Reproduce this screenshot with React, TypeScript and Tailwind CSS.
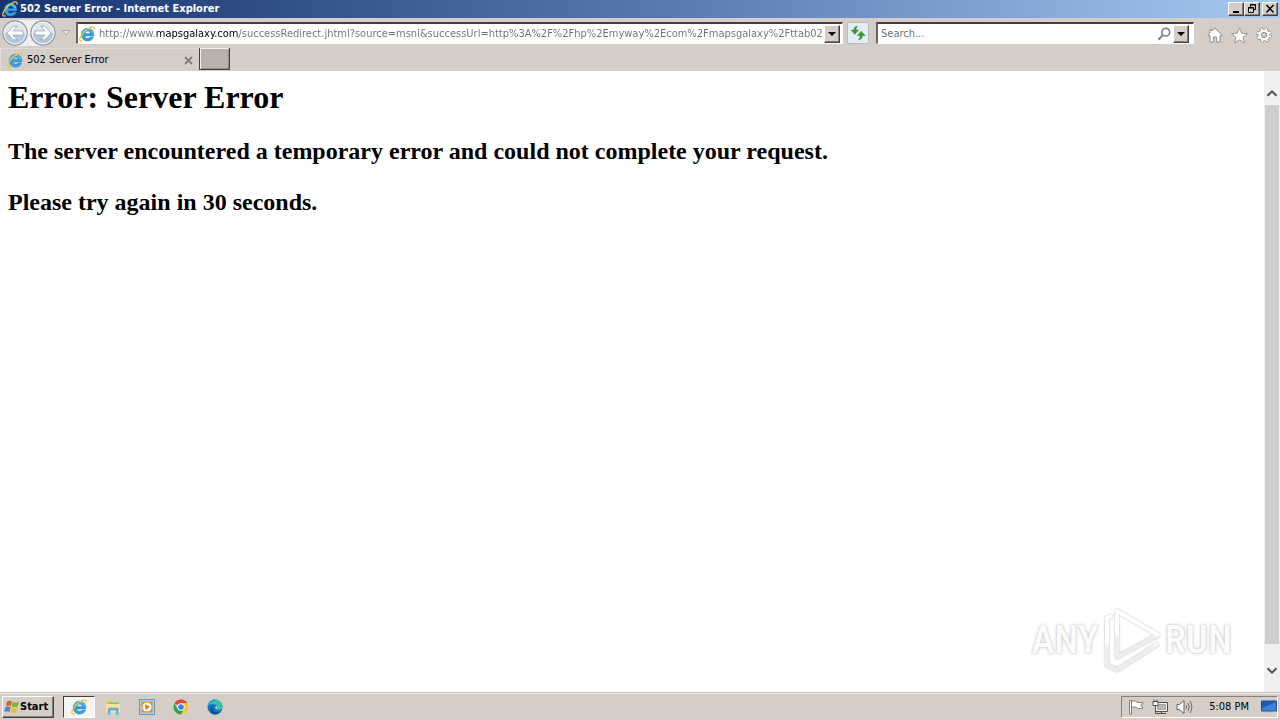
import { useState } from "react";

const ADDRESS =
  "http://www.mapsgalaxy.com/successRedirect.jhtml?source=msni&successUrl=http%3A%2F%2Fhp%2Emyway%2Ecom%2Fmapsgalaxy%2Fttab02%2F";

const RAISED =
  "border border-t-white border-l-white border-r-[#404040] border-b-[#404040] bg-[#d5cec8] shadow-[inset_-1px_-1px_0_#85807b]";

function IeLogo({ className }: { className: string }) {
  return (
    <svg viewBox="0 0 16 16" className={className} aria-hidden="true">
      <path
        d="M8.6 2.3C12.4 2.3 14.8 4.9 14.8 8.6V9.9H6C6.2 11.4 7.2 12.3 8.8 12.3C9.9 12.3 10.7 11.9 11.2 11.1H14.5C13.6 13.6 11.5 15 8.7 15C5 15 2.3 12.4 2.3 8.7C2.3 5 5 2.3 8.6 2.3ZM6.1 7.4H11.3C11.1 5.9 10.1 5 8.7 5C7.3 5 6.3 5.9 6.1 7.4Z"
        fill="#36a3e0"
        fillRule="evenodd"
        stroke="#1c7dbd"
        strokeWidth=".5"
      />
      <path d="M3.6 7.8C4 5.2 6 3.4 8.6 3.4C11 3.4 12.8 4.6 13.5 6.8" fill="none" stroke="#93d7f8" strokeWidth=".9" />
      <path
        d="M3.6 14.6C1.6 15.7.3 14.8 1 12.3C2.2 8.3 7.6 2.9 11.8 1.2C14.3.3 15.7 1.2 14.9 3.8"
        fill="none"
        stroke="#efc333"
        strokeWidth="1.3"
      />
    </svg>
  );
}

function RoundArrow({ flip }: { flip?: boolean }) {
  return (
    <svg viewBox="0 0 26 26" className={flip ? "size-[26px] -scale-x-100" : "size-[26px]"} aria-hidden="true">
      <circle cx="13" cy="13" r="12.2" fill="#dfe4e9" stroke="#8a939d" strokeWidth="1.2" />
      <path d="M1.8 13a11.2 11.2 0 0 0 22.4 0Z" fill="#b3c8dc" />
      <circle cx="13" cy="13" r="10.8" fill="none" stroke="#f1f4f7" strokeWidth="1" />
      <path
        d="M4.8 13L11.4 6.2H15.2L10.8 10.9H21V15.1H10.8L15.2 19.8H11.4Z"
        fill="#fff"
        stroke="#93a8bc"
        strokeWidth=".8"
      />
    </svg>
  );
}

function DropButton({ label }: { label: string }) {
  return (
    <button aria-label={label} className={`flex h-[18px] w-4 shrink-0 items-center justify-center ${RAISED}`}>
      <svg viewBox="0 0 8 4" className="h-1 w-2" aria-hidden="true">
        <path d="M0 0H8L4 4Z" fill="#000" />
      </svg>
    </button>
  );
}

function TitleBar() {
  return (
    <header className="flex h-[18px] items-center bg-linear-to-r from-[#17346f] via-[#5576ae] to-[#a6caf0] pr-0.5 pl-0.5">
      <IeLogo className="size-4" />
      <h1 className="ml-0.5 flex-1 text-[11px] leading-4 font-bold text-white">
        502 Server Error - Internet Explorer
      </h1>
      <button aria-label="Minimize" className={`h-3.5 w-4 ${RAISED}`}>
        <svg viewBox="0 0 14 12" className="h-3 w-3.5" aria-hidden="true">
          <path d="M4 8H10V10H4Z" fill="#000" />
        </svg>
      </button>
      <button aria-label="Restore" className={`h-3.5 w-4 ${RAISED}`}>
        <svg viewBox="0 0 14 12" className="h-3 w-3.5" aria-hidden="true">
          <path d="M5.5 4V1.5H10.5V6.5H9M5 2H11M3.5 4.5H8.5V9.5H3.5ZM3 5H9" fill="none" stroke="#000" />
        </svg>
      </button>
      <button aria-label="Close" className={`ml-0.5 h-3.5 w-4 ${RAISED}`}>
        <svg viewBox="0 0 14 12" className="h-3 w-3.5" aria-hidden="true">
          <path d="M3.5 2L10.5 9.5M10.5 2L3.5 9.5" stroke="#000" strokeWidth="1.5" />
        </svg>
      </button>
    </header>
  );
}

function Toolbar() {
  const [address, setAddress] = useState(ADDRESS);
  return (
    <div className="flex h-[30px] items-center pr-2 pl-0.5">
      <div className="flex w-[54px] gap-0.5 rounded-full bg-[#f0efee]">
        <button aria-label="Back">
          <RoundArrow />
        </button>
        <button aria-label="Forward">
          <RoundArrow flip />
        </button>
      </div>
      <button aria-label="Recent pages" className="flex w-5 justify-center">
        <svg viewBox="0 0 10 6" className="h-1.5 w-2.5" aria-hidden="true">
          <path d="M1 .5H9L5 5Z" fill="#e6e2df" stroke="#aaa5a0" />
        </svg>
      </button>
      <div className="flex h-[22px] flex-1 items-center border-t-2 border-r border-b border-l-2 border-t-[#453d42] border-r-white border-b-white border-l-[#6a6461] bg-white pr-0.5 pl-px">
        <IeLogo className="size-4 shrink-0" />
        <input
          aria-label="Address"
          spellCheck={false}
          value={address}
          onChange={(e) => setAddress(e.target.value)}
          className="ml-1 min-w-0 flex-1 bg-[linear-gradient(to_right,#707070_56px,#000_56px,#000_140px,#707070_140px)] bg-clip-text text-[11px] leading-4 text-transparent caret-black outline-none"
        />
        <span className="w-0.5" />
        <DropButton label="Address history" />
      </div>
      <button
        aria-label="Refresh"
        className="ml-1 flex size-[22px] items-center justify-center rounded-xs border border-[#b5bcc2] bg-[#e6edf2]"
      >
        <svg viewBox="0 0 16 16" className="size-4" aria-hidden="true">
          <path
            d="M7.5 1.2C5 1.2 4 2.6 4 5H1L4.8 9.4L8.6 5H6C6 3.4 6.4 2.2 7.5 1.2ZM8.5 14.8C11 14.8 12.4 13.2 12.4 10.6H15.2L11.2 6.2L7.2 10.6H10C10 12.4 9.6 13.8 8.5 14.8Z"
            fill="#3b9a36"
            stroke="#27802a"
            strokeWidth=".4"
          />
        </svg>
      </button>
      <div className="ml-[7px] flex h-[22px] w-[318px] items-center border-t-2 border-r border-b border-l-2 border-t-[#453d42] border-r-white border-b-white border-l-[#6a6461] bg-white pr-1">
        <input
          aria-label="Search"
          placeholder="Search..."
          className="min-w-0 flex-1 pl-[3px] text-[11px] leading-4 outline-none placeholder:text-[#707070]"
        />
        <button aria-label="Search the web" className="mr-0.5">
          <svg viewBox="0 0 14 14" className="size-3.5" aria-hidden="true">
            <circle cx="8.8" cy="5.2" r="3.9" fill="none" stroke="#85858a" strokeWidth="1.7" />
            <path d="M6 8L1.4 12.6" stroke="#85858a" strokeWidth="2.2" />
          </svg>
        </button>
        <DropButton label="Search providers" />
      </div>
      <nav className="ml-[13px] flex items-center gap-2 pt-1" aria-label="Browser tools">
        <button aria-label="Home">
          <svg viewBox="0 0 16 16" className="size-4" aria-hidden="true">
            <path
              d="M8 1L15.2 8.2L14 9.2L13 8.4V15H9.6V10H6.4V15H3V8.4L2 9.2L.8 8.2L3 6V2.5H5V4Z"
              fill="#fff"
              stroke="#8b8783"
              strokeWidth=".9"
            />
          </svg>
        </button>
        <button aria-label="Favorites">
          <svg viewBox="0 0 18 18" className="size-[17px]" aria-hidden="true">
            <path
              d="M9 .9L11.3 6.5L17.3 7L12.7 10.9L14.2 16.9L9 13.6L3.8 16.9L5.3 10.9L.7 7L6.7 6.5Z"
              fill="#fff"
              stroke="#8b8783"
              strokeWidth=".9"
            />
          </svg>
        </button>
        <button aria-label="Tools">
          <svg viewBox="0 0 16 16" className="size-4" aria-hidden="true">
            <circle cx="8" cy="8" r="6.2" fill="none" stroke="#8b8783" strokeWidth="3.2" strokeDasharray="2.9 1.97" />
            <circle cx="8" cy="8" r="4.6" fill="none" stroke="#8b8783" strokeWidth="3.4" />
            <circle cx="8" cy="8" r="6" fill="none" stroke="#fff" strokeWidth="2.6" strokeDasharray="1.7 3.01" strokeDashoffset="-.6" />
            <circle cx="8" cy="8" r="4.3" fill="none" stroke="#fff" strokeWidth="2.6" />
            <circle cx="8" cy="8" r="2.6" fill="#d5cec8" stroke="#8b8783" strokeWidth=".8" />
          </svg>
        </button>
      </nav>
    </div>
  );
}

function TabStrip() {
  return (
    <div className="flex h-[23px]">
      <div className="flex w-[199px] items-center border-t border-l border-[#e2ddd9] pr-1.5 pl-1.5">
        <IeLogo className="size-4" />
        <span className="ml-1 flex-1 text-[11px] leading-4 text-black">502 Server Error</span>
        <button aria-label="Close tab">
          <svg viewBox="0 0 9 9" className="size-[9px]" aria-hidden="true">
            <path d="M1 1L8 8M8 1L1 8" stroke="#84807c" strokeWidth="1.8" />
          </svg>
        </button>
      </div>
      <button
        aria-label="New tab"
        className="h-[22px] w-[31px] border-r border-b border-l border-r-[#45413e] border-b-[#45413e] border-l-[#45413e] bg-[#b9b1ab] shadow-[inset_1px_1px_0_#f4f1ee,inset_-1px_-1px_0_#918a85]"
      />
    </div>
  );
}

function Watermark() {
  return (
    <div className="absolute right-8 bottom-[18px] flex items-center font-['Roboto_Condensed','Liberation_Sans_Narrow','Liberation_Sans',sans-serif] text-[39px] leading-[68px] font-medium text-[#fbfbfb] [text-shadow:0_0_2px_#bbb,0_0_4px_#ddd]">
      <span>ANY</span>
      <svg viewBox="0 0 62 68" className="ml-0.5 h-[68px] w-[62px] drop-shadow-[0_0_1px_#bbb]" aria-hidden="true">
        <defs>
          <linearGradient id="mark" x1="0" y1="0" x2="0" y2="1">
            <stop offset=".5" stopColor="#fff" />
            <stop offset=".6" stopColor="#ededed" />
          </linearGradient>
        </defs>
        <g fill="none" stroke="url(#mark)" strokeWidth="4" strokeLinejoin="round">
          <path d="M16 5L57 29L16 51Z" />
          <path d="M11 10L6 12V59L16 64L57 38" />
        </g>
      </svg>
      <span className="ml-0.5">RUN</span>
    </div>
  );
}

function ScrollBar() {
  return (
    <div className="flex w-4 flex-col bg-[#f0f0f0]">
      <button aria-label="Scroll up" className="flex h-[34px] items-center justify-center pt-2.5">
        <svg viewBox="0 0 12 8" className="h-2 w-3" aria-hidden="true">
          <path d="M1.5 6.8L6 2.3L10.5 6.8" fill="none" stroke="#505050" strokeWidth="2" />
        </svg>
      </button>
      <div className="mx-px flex-1 bg-[#cdcdcd]" />
      <button aria-label="Scroll down" className="flex h-12 items-center justify-center pt-1.5">
        <svg viewBox="0 0 12 8" className="h-2 w-3" aria-hidden="true">
          <path d="M1.5 1.2L6 5.7L10.5 1.2" fill="none" stroke="#505050" strokeWidth="2" />
        </svg>
      </button>
    </div>
  );
}

function Taskbar() {
  return (
    <footer className="flex h-[28px] items-center border-t border-[#c3beb8] bg-[#d5cec8] pr-0.5 pl-0.5 shadow-[inset_0_1px_0_#f4f1ee]">
      <button className={`flex h-[22px] w-[52px] items-center pl-px ${RAISED}`}>
        <svg viewBox="0 0 16 16" className="size-4" aria-hidden="true">
          <path d="M3 2.5C5 1.3 6.3 1.6 8 2.6L6.8 7.4C5.2 6.4 3.6 6.4 1.8 7.2Z" fill="#e5602a" />
          <path d="M8.8 3C10.8 4 12.6 3.8 15 2.8L13.7 7.6C11.6 8.6 9.6 8.6 7.6 7.6Z" fill="#79b73b" />
          <path d="M1.5 8.2C3.3 7.4 5 7.4 6.6 8.4L5.4 13C3.7 12 2.2 12 .2 12.8Z" fill="#3e8bd0" />
          <path d="M7.4 8.6C9.4 9.6 11.4 9.6 13.5 8.6L12.3 13.2C10 14.3 8.2 14.2 6.2 13.2Z" fill="#f3bd2c" />
        </svg>
        <span className="text-[11px] leading-4 font-bold text-black">Start</span>
      </button>
      <nav className="ml-[9px] flex items-center" aria-label="Pinned programs">
        <button
          aria-label="Internet Explorer"
          className="flex h-[22px] w-8 items-center justify-center border border-t-[#404040] border-r-white border-b-white border-l-[#404040] bg-[#f6f4f2]"
        >
          <IeLogo className="size-4" />
        </button>
        <button aria-label="File Explorer" className="flex w-9 justify-center">
          <svg viewBox="0 0 16 16" className="size-4" aria-hidden="true">
            <path d="M1 3L2 1.5H6.5L7.5 3H14.5V13H1Z" fill="#e7cb70" />
            <path d="M3 3.5H13.5V6H3Z" fill="#88c07d" />
            <path d="M1 5H15V13.5H1Z" fill="#f6e09a" />
            <path d="M3 15.5V10.2Q3 8.8 4.5 8.8H12Q13.5 8.8 13.5 10.2V15.5H11V11.5H5.5V15.5Z" fill="#66aed5" />
          </svg>
        </button>
        <button aria-label="Media Player" className="flex w-8 justify-center">
          <svg viewBox="0 0 16 16" className="size-4" aria-hidden="true">
            <rect x=".5" y=".5" width="15" height="15" fill="#a9d1ec" stroke="#5a9bca" />
            <rect x="2.5" y="2.5" width="11" height="11" fill="#ef8b1e" />
            <circle cx="8" cy="8" r="4.6" fill="#fff" />
            <path d="M6.4 5L11 8L6.4 11Z" fill="#e87512" />
          </svg>
        </button>
        <button aria-label="Chrome" className="flex w-9 justify-center">
          <svg viewBox="0 0 16 16" className="size-4" aria-hidden="true">
            <path d="M8 8L1.5 4.25A7.5 7.5 0 0 1 14.5 4.25H8Z" fill="#df4634" />
            <path d="M8 8L8 4.25H14.5A7.5 7.5 0 0 1 8 15.5L11.2 9.8Z" fill="#f7c72c" />
            <path d="M8 8L11.2 9.8L8 15.5A7.5 7.5 0 0 1 1.5 4.25L4.8 9.9Z" fill="#34a353" />
            <circle cx="8" cy="8" r="3.7" fill="#fff" />
            <circle cx="8" cy="8" r="2.8" fill="#4181e5" />
          </svg>
        </button>
        <button aria-label="Edge" className="flex w-8 justify-center">
          <svg viewBox="0 0 16 16" className="size-4" aria-hidden="true">
            <circle cx="8" cy="8" r="7.5" fill="#1673c4" />
            <path d="M.6 7C1.3 2.8 4.4.5 8 .5C12.6.5 15.6 4 15.5 7.4C15.4 9.8 13.6 11 11.6 11C10.2 11 9.2 10.6 9.2 10C9.2 9.5 9.9 9.3 9.9 8C9.9 6.3 8.2 5.1 5.8 5.1C3.4 5.1 1.6 6 .6 7Z" fill="#39bfa5" />
            <path d="M.6 7C1.3 2.8 4.4.5 8 .5L8 2C4.5 2.4 2 4.3.6 7Z" fill="#239bd7" />
            <path d="M6 7C4.5 9.8 6.5 13.3 10.3 13.5C12 13.5 13.2 13 14.3 12.1C12 16 7.2 16.4 4.4 14.2C2.5 11.5 3.4 8.2 6 7Z" fill="#114f9c" />
            <path d="M9.2 10C8 9.5 8.1 8 9.3 7.1C10.2 8 9.9 9.2 9.2 10Z" fill="#e8f3f2" />
          </svg>
        </button>
      </nav>
      <div className="ml-auto flex h-[22px] items-center border border-t-[#85807b] border-r-white border-b-white border-l-[#85807b] pl-1.5">
        <button aria-label="Action Center">
          <svg viewBox="0 0 16 16" className="size-4" aria-hidden="true">
            <path d="M1.5 1.5H3.5V15H1.5Z" fill="#fff" stroke="#65615e" strokeWidth=".8" />
            <path d="M3.5 2.5C6 1.5 7.5 2 9 3.2L15.3 4L12.8 6.2L15 9C11.5 10 9.5 9.8 8.5 8.5C6.8 7.5 5 8 3.5 8.6Z" fill="#fff" stroke="#65615e" strokeWidth=".8" />
          </svg>
        </button>
        <button aria-label="Network" className="ml-2">
          <svg viewBox="0 0 16 16" className="size-4" aria-hidden="true">
            <path d="M3.5 3.5H15.5V12.5H3.5ZM5.5 14.5H14M9.5 12.5V14.5" fill="#f7f7f7" stroke="#504d4a" />
            <path d="M5.5 5.5H13.5V10.5H5.5Z" fill="#b8b5b1" stroke="#85817d" strokeWidth=".6" />
            <path d="M1 2.5H6V6.5H1ZM2 2.5V.5M5 2.5V.5" fill="#fff" stroke="#504d4a" />
            <path d="M3.5 6.5V14.5H6" fill="none" stroke="#504d4a" />
          </svg>
        </button>
        <button aria-label="Volume" className="ml-2">
          <svg viewBox="0 0 17 16" className="h-4 w-[17px]" aria-hidden="true">
            <path d="M1 5.5H3.5L8 1.5V14.5L3.5 10.5H1Z" fill="#fff" stroke="#65615e" />
            <path d="M10 6Q11.3 8 10 10M12 4Q14.4 8 12 12M14 2Q17.8 8 14 14" fill="none" stroke="#65615e" strokeWidth=".9" />
          </svg>
        </button>
        <time className="ml-4 text-[11px] leading-4 text-black">5:08 PM</time>
        <button aria-label="Show desktop" className="ml-3">
          <svg viewBox="0 0 16 14" className="h-3.5 w-4" aria-hidden="true">
            <path d="M.5 1H15.5V11H.5Z" fill="#1b5ab5" stroke="#244b86" />
            <path d="M1 8L15 2V10.5H1Z" fill="#3b82dd" />
            <path d="M5 12.5H11" stroke="#c5cbd2" />
          </svg>
        </button>
      </div>
    </footer>
  );
}

export default function App() {
  return (
    <div className="flex min-h-screen flex-col bg-[#d5cec8] font-['DejaVu_Sans_Condensed','DejaVu_Sans',sans-serif]">
      <TitleBar />
      <Toolbar />
      <TabStrip />
      <div className="flex flex-1 bg-white">
        <main className="relative flex-1 px-2 pt-2 font-['Liberation_Serif',serif] font-bold text-black">
          <h2 className="text-[32px] leading-9">Error: Server Error</h2>
          <p className="mt-[22px] text-2xl leading-7">
            The server encountered a temporary error and could not complete your request.
          </p>
          <p className="mt-[23px] text-2xl leading-7">Please try again in 30 seconds.</p>
          <Watermark />
        </main>
        <ScrollBar />
      </div>
      <Taskbar />
    </div>
  );
}
